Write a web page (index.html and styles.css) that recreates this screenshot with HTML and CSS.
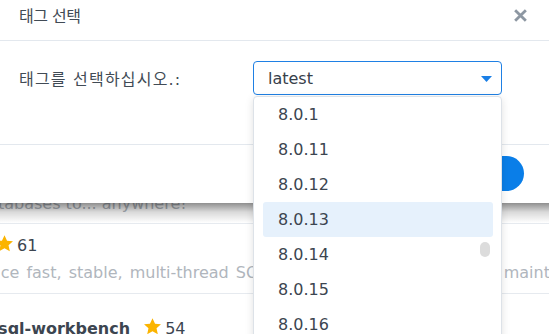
FILE: index.html
```html
<!DOCTYPE html>
<html lang="ko">
<head>
  <meta charset="UTF-8">
  <title>태그 선택</title>
  <link rel="stylesheet" href="styles.css">
</head>
<body>

<div class="page">
  <div class="app-row app-row-tail">
    <p class="app-desc app-desc-first">databases to... anywhere!</p>
  </div>
  <div class="app-row app-row-mid">
    <div class="app-head app-head-clip">
      <svg class="star" viewBox="0 0 24 24"><path d="M12 1.5l3.2 6.9 7.5.8-5.6 5.1 1.6 7.4L12 17.9l-6.7 3.8 1.6-7.4-5.6-5.1 7.5-.8z"/></svg><span class="app-count">61</span>
    </div>
    <p class="app-desc app-desc-clip">Produce fast, stable, multi-thread SQL dumps. Simple to use, and maintain.</p>
  </div>
  <div class="app-row app-row-last">
    <div class="app-head">
      <span class="app-name">mysql-workbench</span>
      <svg class="star" viewBox="0 0 24 24"><path d="M12 1.5l3.2 6.9 7.5.8-5.6 5.1 1.6 7.4L12 17.9l-6.7 3.8 1.6-7.4-5.6-5.1 7.5-.8z"/></svg><span class="app-count">54</span>
    </div>
  </div>
</div>

<div class="dialog">
  <div class="dialog-header">
    <span class="dialog-title">태그 선택</span>
    <svg class="dialog-close" viewBox="0 0 14 14"><path d="M2 2L12 12M12 2L2 12"/></svg>
  </div>
  <div class="dialog-body">
    <label class="field-label">태그를 선택하십시오.:</label>
    <div class="select">
      <span class="select-value">latest</span>
      <svg class="select-caret" viewBox="0 0 11 6"><path d="M0 0h11L5.5 6z"/></svg>
    </div>
  </div>
  <div class="dialog-footer">
    <button class="btn-primary">확인</button>
  </div>
</div>

<div class="dropdown">
  <ul class="tag-list">
    <li>8.0.1</li>
    <li>8.0.11</li>
    <li>8.0.12</li>
    <li class="active">8.0.13</li>
    <li>8.0.14</li>
    <li>8.0.15</li>
    <li>8.0.16</li>
    <li>8.0.17</li>
  </ul>
  <div class="scroll-thumb"></div>
</div>

</body>
</html>
```

FILE: styles.css
```css
body {
  margin: 0;
  font-family: "DejaVu Sans", "Noto Sans CJK KR", sans-serif;
  font-size: 16px;
  color: #3c4550;
  background: #fff;
  overflow: hidden;
}

/* page behind the dialog */
.page {
  padding-top: 193px;
}
.app-row {
  border-bottom: 1px solid #e6eaef;
  white-space: nowrap;
}
.app-row-tail {
  padding-bottom: 8px;
}
.app-row-mid {
  padding: 10px 0 9px;
}
.app-row-last {
  padding-top: 23px;
  border-bottom: none;
}
.app-desc {
  margin: 0;
  line-height: 22px;
  color: #b0b6bd;
}
.app-desc-first {
  margin-left: -22px;
}
.app-desc-clip {
  margin-top: 5px;
  margin-left: -45px;
  word-spacing: 2px;
}
.app-head {
  line-height: 22px;
  margin-left: -29px;
}
.app-head-clip {
  margin-left: -5px;
}
.app-name {
  font-weight: bold;
  margin-right: 8px;
}
.star {
  width: 19px;
  height: 19px;
  fill: #fbb400;
  vertical-align: -2px;
  margin-right: 3px;
}

/* dialog */
.dialog {
  position: absolute;
  top: 0;
  left: 0;
  right: 0;
  background: #fff;
}
.dialog::after {
  content: "";
  position: absolute;
  left: 0;
  right: 0;
  top: 100%;
  height: 20px;
  background: linear-gradient(rgba(0, 0, 0, 0.44), rgba(0, 0, 0, 0.15) 45%, rgba(0, 0, 0, 0));
}
.dialog-header {
  height: 40px;
  display: flex;
  align-items: center;
  justify-content: space-between;
  padding: 0 21px 0 19px;
  border-bottom: 1px solid #e3e8ee;
}
.dialog-title {
  font-size: 16px;
  letter-spacing: -0.5px;
  color: #414b55;
  margin-top: -11px;
}
.dialog-close {
  width: 15px;
  height: 15px;
  margin-top: -9px;
  stroke: #8d97a2;
  stroke-width: 2.6;
  fill: none;
}
.dialog-body {
  display: grid;
  grid-template-columns: 234px 249px;
  align-items: center;
  padding: 20px 0 49px 19px;
  border-bottom: 1px solid #e3e8ee;
}
.field-label {
  font-size: 16px;
  letter-spacing: 1.2px;
  color: #414b55;
}
.select {
  height: 34px;
  box-sizing: border-box;
  border: 1px solid #1f80e4;
  border-radius: 4px;
  display: flex;
  align-items: center;
  justify-content: space-between;
  padding: 0 9px 0 14px;
}
.select-value {
  color: #37404a;
}
.select-caret {
  width: 11px;
  height: 6px;
  fill: #1a7fe6;
  margin-top: 2px;
}
.dialog-footer {
  height: 58px;
  display: flex;
  justify-content: flex-end;
  align-items: flex-start;
  padding-right: 25px;
}
.btn-primary {
  margin-top: 11px;
  height: 35px;
  width: 84px;
  border: none;
  border-radius: 18px;
  background: #0a7ee8;
  color: #fff;
  font-family: inherit;
  font-size: 14px;
}

/* tag dropdown */
.dropdown {
  position: absolute;
  left: 253px;
  top: 96px;
  width: 249px;
  height: 280px;
  box-sizing: border-box;
  background: #fff;
  border: 1px solid #dde2e8;
  border-radius: 4px;
  box-shadow: 0 2px 8px rgba(0, 0, 0, 0.12);
  z-index: 2;
  overflow: hidden;
}
.tag-list {
  list-style: none;
  margin: 0;
  padding: 0 8px 0 9px;
}
.tag-list li {
  height: 35px;
  line-height: 36px;
  padding-left: 15px;
  border-radius: 3px;
  color: #3c4550;
}
.tag-list li.active {
  background: #e6f1fc;
}
.scroll-thumb {
  position: absolute;
  top: 145px;
  right: 11px;
  width: 10px;
  height: 15px;
  border-radius: 5px;
  background: #dcdcdc;
}
```
